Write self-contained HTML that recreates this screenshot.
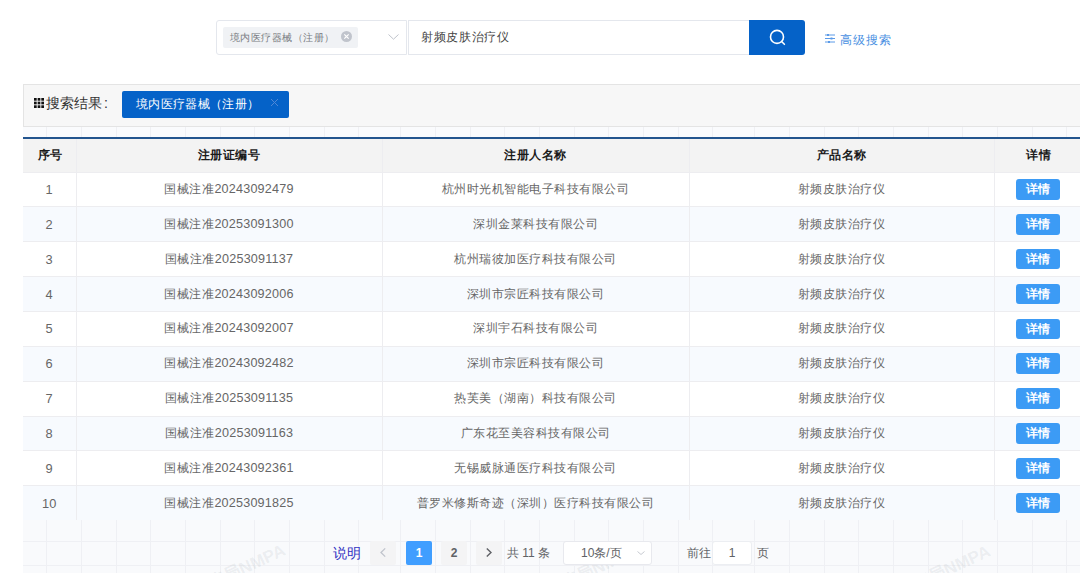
<!DOCTYPE html>
<html><head><meta charset="utf-8">
<style>
*{box-sizing:border-box;margin:0;padding:0}
html,body{width:1080px;height:573px;overflow:hidden;background:#fff;font-family:"Liberation Sans",sans-serif;position:relative}
.abs{position:absolute}
/* search bar */
.sel{left:216px;top:20px;width:191px;height:35px;border:1px solid #e4e7ed;border-radius:3px 0 0 3px;background:#fff}
.seltag{left:223px;top:27px;width:135px;height:21px;background:#f0f2f5;border-radius:2px}
.seltag span{position:absolute;left:7px;top:0;line-height:21px;font-size:10px;letter-spacing:0.45px;color:#7a7d83;white-space:nowrap}
.selclose{left:341px;top:31px;width:11px;height:11px;border-radius:50%;background:#c0c4cc}
.inp{left:408px;top:20px;width:342px;height:35px;border:1px solid #e4e7ed;border-right:none;background:#fff}
.inp span{position:absolute;left:12px;top:0;line-height:33px;font-size:12px;letter-spacing:0.7px;color:#444;white-space:nowrap}
.sbtn{left:749px;top:20px;width:56px;height:35px;background:#0562c8;border-radius:0 3px 3px 0}
.adv{left:840px;top:32px;font-size:12px;letter-spacing:0.85px;color:#4a90e2;line-height:16px;white-space:nowrap}
/* results panel */
.panel{left:23px;top:84px;width:1070px;height:43px;background:#f7f7f7;border:1px solid #e4e4e4}
.ptitle{left:46px;top:95px;font-size:14px;line-height:17px;color:#333;white-space:nowrap}
.ptag{left:122px;top:90.5px;width:167px;height:27px;background:#0562c8;border-radius:2px}
.ptag span{position:absolute;left:14px;top:0;line-height:27px;font-size:12px;letter-spacing:0.35px;color:#fff;white-space:nowrap}
/* table */
.bline{left:23px;top:137px;width:1057px;height:2px;background:#23558f}
table{position:absolute;left:23px;top:139px;width:1057px;border-collapse:collapse;table-layout:fixed}
td,th{height:34.87px;text-align:center;font-size:12px;letter-spacing:0.5px;color:#666;border-right:1px solid #ededf0;border-bottom:1px solid #ededf0;white-space:nowrap;padding:0}
th{height:33px;background:#f3f3f3;color:#1a1a1a;font-weight:bold;font-size:12px;letter-spacing:0.5px}
tr.s td{background:#f7fafe}
td{padding-top:0}
td:first-child{font-size:12.8px;letter-spacing:0.2px}
tr td{background:#fff}
.dg{font-size:12.6px;letter-spacing:0.2px}
.det{display:inline-block;position:relative;top:0;left:1px;width:44px;height:20.5px;line-height:20.5px;background:#3c9bf5;color:#fff;font-weight:bold;border-radius:3px;font-size:12px;vertical-align:middle}
/* footer */
.foot{left:23px;top:520px;width:1057px;height:53px;background:#f9fafc}
.grid1{left:23px;top:522px;width:1057px;height:51px;background-image:linear-gradient(to right,rgba(200,204,214,.35) 1px,transparent 1px),linear-gradient(to bottom,rgba(200,204,214,.35) 1px,transparent 1px);background-size:34.7px 24px;background-position:24.3px 19.8px}
.grid2{left:23px;top:127px;width:1057px;height:10px;background-color:#fafbfd}
.wmc{width:0;height:0}
.wmc span{position:absolute;right:0;bottom:0;font-size:17px;line-height:17px;font-weight:bold;color:rgba(120,125,135,.11);transform:rotate(-25deg);transform-origin:right bottom;white-space:nowrap}
.pg{top:541px;height:24px;border-radius:2px;background:#f4f4f5;text-align:center;line-height:24px;font-size:12px;color:#606266;font-weight:bold}
</style></head><body>

<div class="abs sel"></div>
<div class="abs seltag"><span>境内医疗器械（注册）</span></div>
<div class="abs selclose"></div>
<div class="abs inp"><span>射频皮肤治疗仪</span></div>
<div class="abs sbtn"></div>
<div class="abs adv">高级搜索</div>


<svg class="abs" style="left:341px;top:31px" width="11" height="11" viewBox="0 0 11 11"><path d="M3.3 3.3L7.7 7.7M7.7 3.3L3.3 7.7" stroke="#fff" stroke-width="1.2"/></svg>
<svg class="abs" style="left:387px;top:33px" width="13" height="8" viewBox="0 0 13 8"><path d="M1.5 1.5L6.5 6.2L11.5 1.5" stroke="#c0c4cc" stroke-width="1" fill="none"/></svg>
<svg class="abs" style="left:765px;top:25px" width="26" height="26" viewBox="0 0 26 26"><circle cx="12" cy="11.9" r="6.5" stroke="#fff" stroke-width="1.6" fill="none"/><path d="M16.8 16.7L19.4 19.3" stroke="#fff" stroke-width="1.6" stroke-linecap="round"/></svg>
<svg class="abs" style="left:824px;top:32px" width="13" height="13" viewBox="0 0 13 13"><path d="M1 3h10M1 6.5h10M1 10h10" stroke="#5a9ae8" stroke-width="1"/><rect x="3" y="2" width="2" height="2" fill="#5a9ae8"/><rect x="6.5" y="5.5" width="2" height="2" fill="#5a9ae8"/><rect x="4" y="9" width="2" height="2" fill="#5a9ae8"/></svg>
<div class="abs panel"></div>
<div class="abs ptitle">搜索结果<span style="margin-left:2px">:</span></div>
<div class="abs ptag"><span>境内医疗器械（注册）</span></div>
<!--grid--><svg class="abs" style="left:34px;top:98px" width="10" height="10" viewBox="0 0 10 10"><g fill="#111"><rect x="0" y="0" width="2.7" height="2.7"/><rect x="3.65" y="0" width="2.7" height="2.7"/><rect x="7.3" y="0" width="2.7" height="2.7"/><rect x="0" y="3.65" width="2.7" height="2.7"/><rect x="3.65" y="3.65" width="2.7" height="2.7"/><rect x="7.3" y="3.65" width="2.7" height="2.7"/><rect x="0" y="7.3" width="2.7" height="2.7"/><rect x="3.65" y="7.3" width="2.7" height="2.7"/><rect x="7.3" y="7.3" width="2.7" height="2.7"/></g></svg>
<svg class="abs" style="left:270px;top:98px" width="9" height="9" viewBox="0 0 9 9"><path d="M1 1L8 8M8 1L1 8" stroke="#4f87d6" stroke-width="1"/></svg>

<div class="abs grid2"></div>
<svg class="abs" style="left:23px;top:127px" width="1057" height="10" viewBox="0 0 1057 10"><path d="M23.5 0V10 M58.5 0V10 M93.5 0V10 M127.5 0V10 M162.5 0V10 M197.5 0V10 M231.5 0V10 M266.5 0V10 M301.5 0V10 M335.5 0V10 M377.5 0V10 M412.5 0V10 M447.5 0V10 M481.5 0V10 M516.5 0V10 M551.5 0V10 M585.5 0V10 M620.5 0V10 M655.5 0V10 M689.5 0V10 M731.5 0V10 M766.5 0V10 M801.5 0V10 M835.5 0V10 M870.5 0V10 M905.5 0V10 M939.5 0V10 M974.5 0V10 M1009.5 0V10 M1043.5 0V10" stroke="#eff0f4" stroke-width="1" fill="none"/></svg>
<div class="abs bline"></div>
<table>
<colgroup><col style="width:53px"><col style="width:306px"><col style="width:307px"><col style="width:305px"><col style="width:86px"></colgroup>
<tr><th style="padding-left:2px">序号</th><th>注册证编号</th><th>注册人名称</th><th>产品名称</th><th style="padding-left:3px">详情</th></tr>
<tr><td>1</td><td>国械注准<span class="dg">20243092479</span></td><td>杭州时光机智能电子科技有限公司</td><td>射频皮肤治疗仪</td><td><span class="det">详情</span></td></tr>
<tr class="s"><td>2</td><td>国械注准<span class="dg">20253091300</span></td><td>深圳金莱科技有限公司</td><td>射频皮肤治疗仪</td><td><span class="det">详情</span></td></tr>
<tr><td>3</td><td>国械注准<span class="dg">20253091137</span></td><td>杭州瑞彼加医疗科技有限公司</td><td>射频皮肤治疗仪</td><td><span class="det">详情</span></td></tr>
<tr class="s"><td>4</td><td>国械注准<span class="dg">20243092006</span></td><td>深圳市宗匠科技有限公司</td><td>射频皮肤治疗仪</td><td><span class="det">详情</span></td></tr>
<tr><td>5</td><td>国械注准<span class="dg">20243092007</span></td><td>深圳宇石科技有限公司</td><td>射频皮肤治疗仪</td><td><span class="det">详情</span></td></tr>
<tr class="s"><td>6</td><td>国械注准<span class="dg">20243092482</span></td><td>深圳市宗匠科技有限公司</td><td>射频皮肤治疗仪</td><td><span class="det">详情</span></td></tr>
<tr><td>7</td><td>国械注准<span class="dg">20253091135</span></td><td>热芙美（湖南）科技有限公司</td><td>射频皮肤治疗仪</td><td><span class="det">详情</span></td></tr>
<tr class="s"><td>8</td><td>国械注准<span class="dg">20253091163</span></td><td>广东花至美容科技有限公司</td><td>射频皮肤治疗仪</td><td><span class="det">详情</span></td></tr>
<tr><td>9</td><td>国械注准<span class="dg">20243092361</span></td><td>无锡威脉通医疗科技有限公司</td><td>射频皮肤治疗仪</td><td><span class="det">详情</span></td></tr>
<tr class="s"><td>10</td><td>国械注准<span class="dg">20253091825</span></td><td>普罗米修斯奇迹（深圳）医疗科技有限公司</td><td>射频皮肤治疗仪</td><td><span class="det">详情</span></td></tr>
</table>

<div class="abs foot"></div>
<svg class="abs" style="left:23px;top:520px" width="1057" height="53" viewBox="0 0 1057 53"><path d="M23.5 0V53 M58.5 0V53 M93.5 0V53 M127.5 0V53 M162.5 0V53 M197.5 0V53 M231.5 0V53 M266.5 0V53 M301.5 0V53 M335.5 0V53 M377.5 0V53 M412.5 0V53 M447.5 0V53 M481.5 0V53 M516.5 0V53 M551.5 0V53 M585.5 0V53 M620.5 0V53 M655.5 0V53 M689.5 0V53 M731.5 0V53 M766.5 0V53 M801.5 0V53 M835.5 0V53 M870.5 0V53 M905.5 0V53 M939.5 0V53 M974.5 0V53 M1009.5 0V53 M1043.5 0V53 M0 21.5H1057 M0 45.5H1057" stroke="#eff0f4" stroke-width="1" fill="none"/></svg>
<div class="abs wmc" style="left:288px;top:556.5px"><span>国家药监局NMPA</span></div>
<div class="abs wmc" style="left:640.6px;top:556.5px"><span>国家药监局NMPA</span></div>
<div class="abs wmc" style="left:992.8px;top:558px"><span>国家药监局NMPA</span></div>
<div class="abs" style="left:333px;top:545px;font-size:14px;line-height:16px;color:#3232c2;letter-spacing:-0.5px">说明</div>
<div class="abs pg" style="left:370px;width:26px"></div>
<svg class="abs" style="left:378px;top:546px" width="10" height="13" viewBox="0 0 10 13"><path d="M7.2 2.4L3 6.5L7.2 10.6" stroke="#c0c4cc" stroke-width="1.3" fill="none"/></svg>
<div class="abs pg" style="left:406px;width:26px;background:#409eff;color:#fff">1</div>
<div class="abs pg" style="left:441px;width:26px">2</div>
<div class="abs pg" style="left:476px;width:26px"></div>
<svg class="abs" style="left:484px;top:546px" width="10" height="13" viewBox="0 0 10 13"><path d="M2.8 2.4L7 6.5L2.8 10.6" stroke="#606266" stroke-width="1.4" fill="none"/></svg>
<div class="abs" style="left:507px;top:545px;font-size:12px;line-height:16px;color:#606266;white-space:nowrap">共 11 条</div>
<div class="abs" style="left:563px;top:541px;width:89px;height:24px;border:1px solid #e8e9ee;border-radius:3px;background:#fff"></div>
<div class="abs" style="left:581px;top:545px;font-size:12px;line-height:16px;color:#606266;white-space:nowrap">10条/页</div>
<svg class="abs" style="left:636px;top:549px" width="10" height="8" viewBox="0 0 10 8"><path d="M1.5 2.5L5 5.5L8.5 2.5" stroke="#c8cbd2" stroke-width="1" fill="none"/></svg>
<div class="abs" style="left:687px;top:545px;font-size:12px;line-height:16px;color:#606266;white-space:nowrap">前往</div>
<div class="abs" style="left:712px;top:541px;width:40px;height:24px;border:1px solid #eceef2;border-radius:3px;background:#fff;text-align:center;line-height:22px;font-size:12px;color:#606266">1</div>
<div class="abs" style="left:757px;top:545px;font-size:12px;line-height:16px;color:#606266">页</div>
</body></html>
